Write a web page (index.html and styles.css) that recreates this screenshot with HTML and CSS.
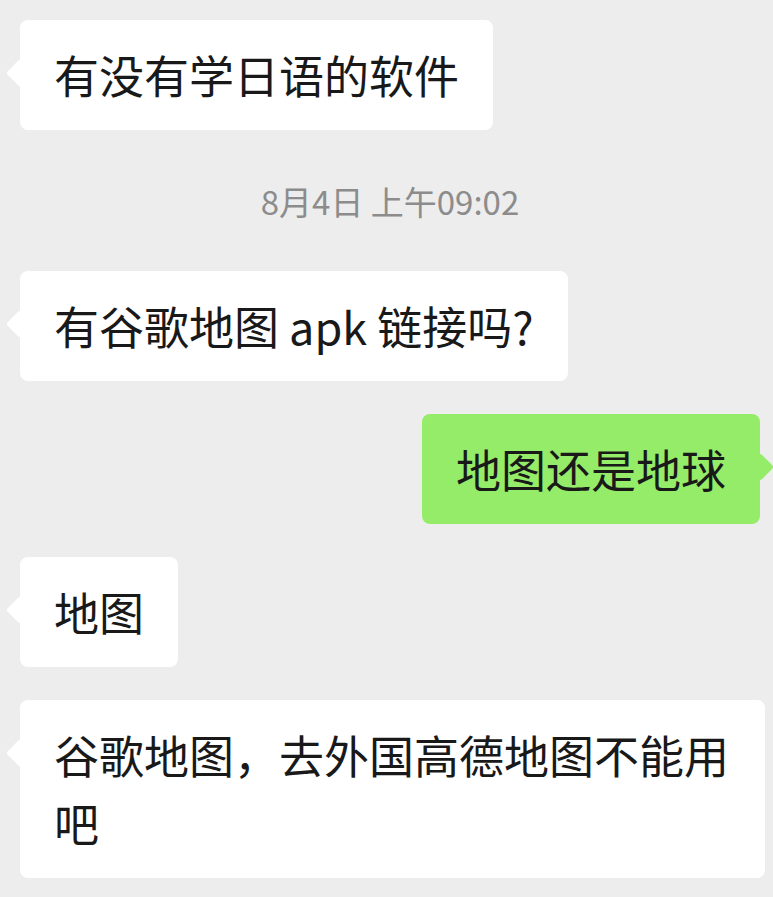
FILE: index.html
```html
<!DOCTYPE html>
<html>
<head>
  <meta charset="UTF-8">
  <meta name="viewport" content="width=device-width, initial-scale=1.0">
  <title>聊天</title>
  <link rel="stylesheet" href="styles.css">
</head>
<body>
  <div class="chat">
    <div class="msg msg-left">
      <div class="bubble">有没有学日语的软件</div>
    </div>

    <div class="time">8月4日 上午09:02</div>

    <div class="msg msg-left">
      <div class="bubble">有谷歌地图 apk 链接吗?</div>
    </div>

    <div class="msg msg-right">
      <div class="bubble bubble-me">地图还是地球</div>
    </div>

    <div class="msg msg-left">
      <div class="bubble">地图</div>
    </div>

    <div class="msg msg-left">
      <div class="bubble">谷歌地图，去外国高德地图不能用吧</div>
    </div>
  </div>
</body>
</html>
```

FILE: styles.css
```css
body {
  margin: 0;
  background-color: #ededed;
  font-family: "Noto Sans CJK SC", "Noto Sans", sans-serif;
}

.chat {
  padding: 20px 8px 0 20px;
}

.msg {
  display: flex;
  margin-bottom: 33px;
}

.msg-right {
  justify-content: flex-end;
  padding-right: 5px;
}

.bubble {
  position: relative;
  box-sizing: border-box;
  max-width: 745px;
  padding: 21px 34px;
  background-color: #fff;
  border-radius: 8px;
  color: #191919;
  font-size: 45px;
  line-height: 68px;
}

/* little tail pointing to the sender */
.bubble::before {
  content: "";
  position: absolute;
  top: 43px;
  left: -10px;
  width: 20px;
  height: 20px;
  background-color: inherit;
  border-radius: 3px;
  transform: rotate(45deg);
}

.bubble-me {
  background-color: #95ec69;
}

.bubble-me::before {
  left: auto;
  right: -10px;
}

.time {
  margin: 51px 0 50px;
  padding-right: 5px;
  text-align: center;
  color: #8c8c8c;
  font-size: 33px;
  line-height: 40px;
}
```
